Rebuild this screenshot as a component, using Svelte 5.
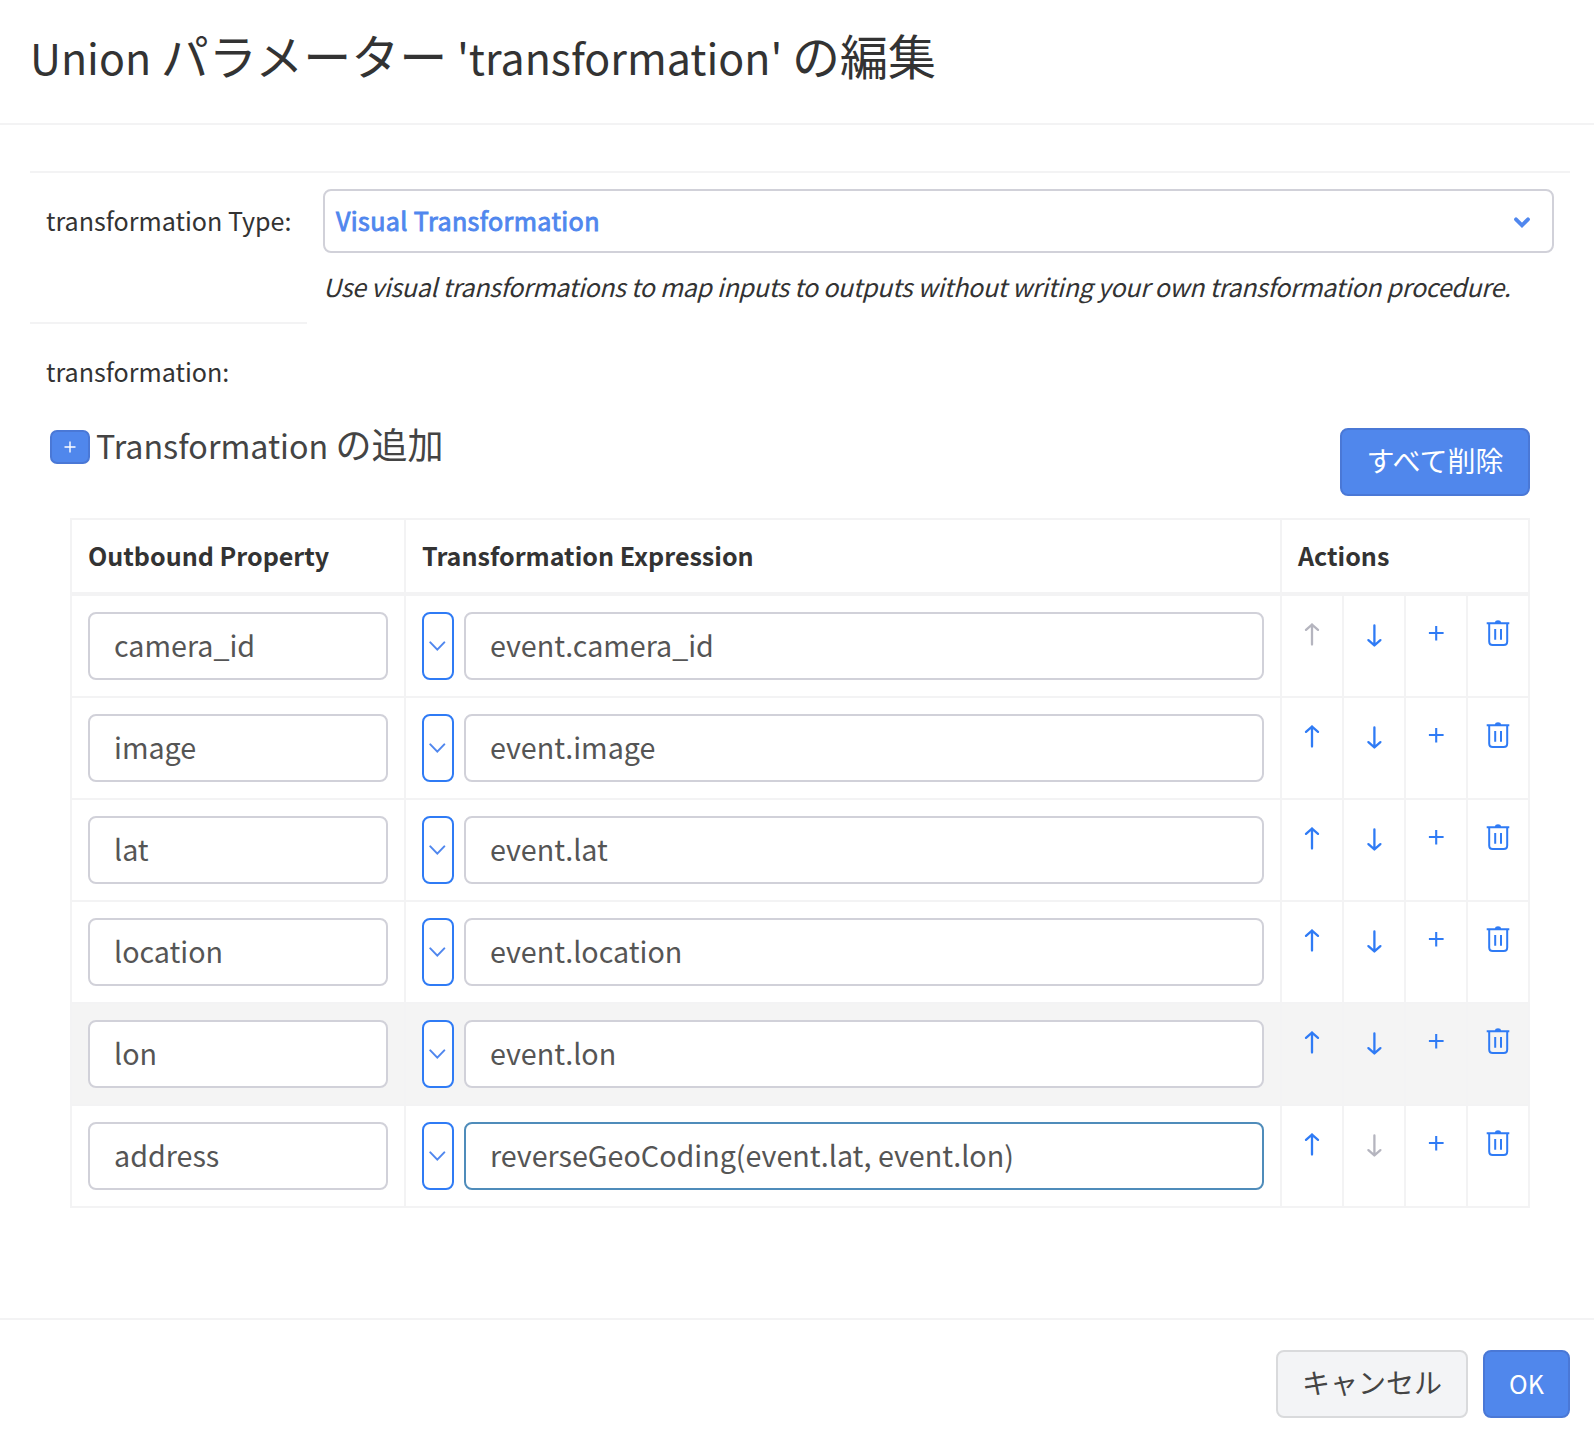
<script>
  let rows = $state([
    { name: 'camera_id', expr: 'event.camera_id' },
    { name: 'image', expr: 'event.image' },
    { name: 'lat', expr: 'event.lat' },
    { name: 'location', expr: 'event.location' },
    { name: 'lon', expr: 'event.lon', hovered: true },
    { name: 'address', expr: 'reverseGeoCoding(event.lat, event.lon)', focused: true }
  ]);
</script>

<div class="dialog">
  <header>
    <h1>Union <span class="ja">パラメーター</span> 'transformation' <span class="ja">の編集</span></h1>
  </header>

  <main>
    <section class="type-row">
      <div class="label">transformation Type:</div>
      <div class="type-field">
        <div class="select">
          <span>Visual Transformation</span>
          <svg width="20" height="18" viewBox="0 0 20 18">
            <path d="M4 8.300l6 6 6-6" stroke="currentColor" stroke-width="3.800" fill="none" stroke-linecap="round" />
          </svg>
        </div>
        <p class="hint">Use visual transformations to map inputs to outputs without writing your own transformation procedure.</p>
      </div>
    </section>

    <div class="rule"></div>
    <div class="label second">transformation:</div>

    <section class="toolbar">
      <button class="add" aria-label="add">
        <svg width="12" height="12" viewBox="0 0 12 12"><path d="M6 .5v11M.5 6h11" stroke="currentColor" stroke-width="1.400" /></svg>
      </button>
      <h2>Transformation <span class="ja">の追加</span></h2>
      <button class="btn primary remove"><span class="ja">すべて削除</span></button>
    </section>

    <div class="table">
      <div class="row head">
        <div class="cell"><b>Outbound Property</b></div>
        <div class="cell"><b>Transformation Expression</b></div>
        <div class="cell wide"><b>Actions</b></div>
      </div>
      {#each rows as row, i}
        <div class="row" class:hovered={row.hovered}>
          <div class="cell"><input bind:value={row.name} /></div>
          <div class="cell expr">
            <button class="pick" aria-label="choose">
              <svg width="18" height="12" viewBox="0 0 18 12"><path d="M1.300 2.400l7 7.200 7-7.200" stroke="currentColor" stroke-width="2" fill="none" stroke-linecap="round" /></svg>
            </button>
            <input class:focused={row.focused} bind:value={row.expr} />
          </div>
          <div class="cell act" class:off={i === 0}>
            <svg width="24" height="28" viewBox="0 0 24 28" fill="none" stroke="currentColor" stroke-width="2.300" stroke-linecap="round" stroke-linejoin="round">
              <path d="M12 24.500V4.500M6 9.900l6-5.300 6 5.300" />
            </svg>
          </div>
          <div class="cell act" class:off={i === rows.length - 1}>
            <svg width="24" height="28" viewBox="0 0 24 28" fill="none" stroke="currentColor" stroke-width="2.300" stroke-linecap="round" stroke-linejoin="round">
              <path d="M12.400 5.500v20M6.400 20.100l6 5.300 6-5.300" />
            </svg>
          </div>
          <div class="cell act">
            <svg width="24" height="28" viewBox="0 0 24 28"><path d="M12.200 6v14.500M4.900 13h14.700" stroke="currentColor" stroke-width="2.100" /></svg>
          </div>
          <div class="cell act">
            <svg width="24" height="28" viewBox="0 0 24 28" fill="none" stroke="currentColor" stroke-width="2">
              <path d="M.7 3.200h22.600M9.500 3a2.600 2.400 0 0 1 5 0M3.200 3.500v18q0 3.500 3.500 3.500h11q3.500 0 3.500-3.500v-18M9.200 9v10.800M15 9v10.800" />
            </svg>
          </div>
        </div>
      {/each}
    </div>
  </main>

  <footer>
    <button class="btn plain"><span class="ja">キャンセル</span></button>
    <button class="btn primary ok">OK</button>
  </footer>
</div>

<style>
  :global(body) {
    background: #fff;
  }
  .dialog, .dialog * {
    box-sizing: border-box;
  }
  .dialog {
    width: 1594px;
    height: 1436px;
    display: flex;
    flex-direction: column;
    font-family: 'Noto Sans CJK JP', sans-serif;
    color: #333;
    font-size: 25.080px;
    line-height: 40px;
    white-space: nowrap;
  }
  h1, h2, p {
    margin: 0;
    font-weight: 400;
  }
  svg {
    display: block;
    flex: none;
  }
  button, input {
    font-family: inherit;
    margin: 0;
    padding: 0;
    line-height: normal;
  }
  header {
    height: 125px;
    border-bottom: 2px solid #f3f3f4;
    padding: 20px 30px 0;
  }
  h1 {
    font-size: 42.920px;
    line-height: 72px;
  }
  h1 .ja {
    font-size: 48px;
  }
  .ja {
    line-height: 1;
  }
  main {
    flex: 1;
    margin: 46px 24px 0 30px;
  }
  .type-row {
    display: flex;
    border-top: 2px solid #f3f3f4;
    height: 151px;
    padding: 16px 16px 0;
  }
  .type-row .label {
    width: 277px;
    padding-top: 11px;
  }
  .type-field {
    flex: 1;
  }
  .select {
    height: 64px;
    border: 2px solid #d1d1d9;
    border-radius: 8px;
    display: flex;
    align-items: center;
    justify-content: space-between;
    padding: 0 20px 2px 11px;
    color: #5087ee;
  }
  .select span {
    -webkit-text-stroke: 0.9px #5087ee;
    letter-spacing: 0.390px;
  }
  .hint {
    font-style: italic;
    letter-spacing: -0.330px;
    padding-top: 13px;
  }
  .rule {
    width: 277px;
    height: 2px;
    background: #f3f3f4;
  }
  .label.second {
    padding: 27px 16px 0;
  }
  .toolbar {
    display: flex;
    align-items: flex-start;
    margin: 37px 40px 0 20px;
    height: 90px;
  }
  .add {
    width: 40px;
    height: 34px;
    margin-top: 2px;
    border: 2px solid #4a78d6;
    border-radius: 7px;
    background: #5087ec;
    color: #fff;
    display: flex;
    align-items: center;
    justify-content: center;
  }
  h2 {
    font-size: 32.250px;
    line-height: 34px;
    color: #444;
    margin: -3px 0 0 6px;
    flex: 1;
  }
  h2 .ja {
    font-size: 36px;
  }
  .btn {
    height: 68px;
    border-radius: 8px;
    border: 2px solid #4a78d6;
    font-size: 25.080px;
    padding-bottom: 2px;
  }
  .btn .ja {
    font-size: 28px;
  }
  .primary {
    background: #5087ec;
    color: #fff;
  }
  .remove {
    width: 190px;
  }
  .plain {
    width: 192px;
    background: #f3f4f6;
    border-color: #d9dadc;
    color: #444;
  }
  .ok {
    width: 87px;
  }
  .table {
    width: 1460px;
    margin-left: 40px;
    border: 2px solid #f3f3f4;
    border-bottom: 0;
  }
  .row {
    display: grid;
    grid-template-columns: 334px 876px 62px 62px 62px 60px;
    height: 102px;
    border-bottom: 2px solid #f3f3f4;
  }
  .head {
    height: 76px;
    border-bottom-width: 4px;
  }
  .head .cell {
    padding-top: 15px;
  }
  .hovered {
    background: #f4f4f4;
  }
  .cell {
    padding: 16px;
    border-right: 2px solid #f3f3f4;
  }
  .cell:last-child {
    border-right: 0;
  }
  .wide {
    grid-column: span 4;
  }
  .expr {
    display: flex;
    gap: 10px;
  }
  input {
    width: 100%;
    height: 68px;
    border: 2px solid #d1d1d9;
    border-radius: 8px;
    background: #fff;
    padding: 0 24px 3px;
    font-size: 28.680px;
    color: #555;
    outline: none;
  }
  input.focused {
    border-color: #4f8cba;
  }
  .pick {
    flex: none;
    width: 32px;
    height: 68px;
    border: 2px solid #2f7bf5;
    border-radius: 8px;
    background: #fff;
    color: #5087ee;
    display: flex;
    align-items: center;
    justify-content: center;
  }
  .row .act {
    padding: 24px 0 0;
    display: flex;
    justify-content: center;
    align-items: flex-start;
    color: #2f7bf5;
  }
  .row .off {
    color: #b5b5bf;
  }
  footer {
    height: 118px;
    border-top: 2px solid #f3f3f4;
    padding: 30px 24px 0;
    display: flex;
    justify-content: flex-end;
    gap: 15px;
  }
</style>
